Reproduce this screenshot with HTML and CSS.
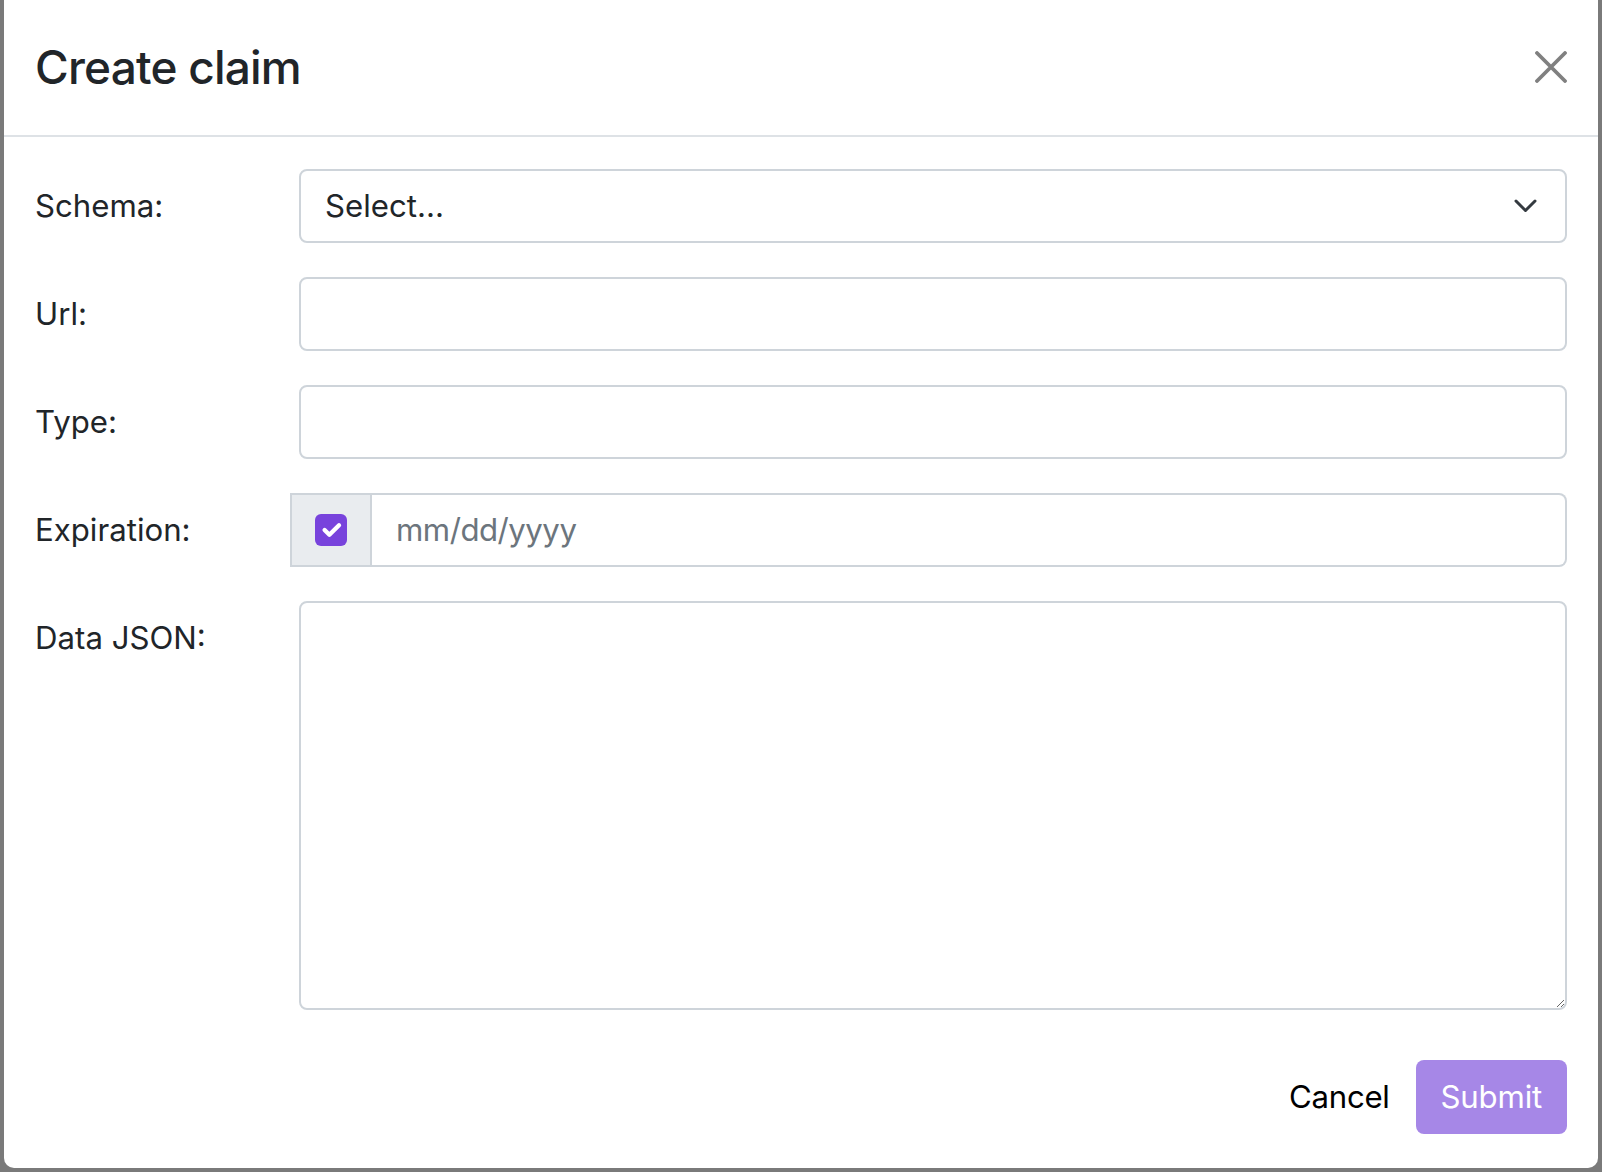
FILE: index.html
```html
<!DOCTYPE html>
<html lang="en">
<head>
<meta charset="utf-8">
<title>Create claim</title>
<link rel="stylesheet" href="styles.css">
</head>
<body>
<div class="backdrop">
  <div class="modal">
    <div class="modal-header">
      <h4 class="modal-title">Create claim</h4>
      <button class="btn-close" aria-label="Close">
        <svg width="32" height="32" viewBox="0 0 32 32"><path d="M2 2L30 30M30 2L2 30" stroke="#808080" stroke-width="3.8" stroke-linecap="round" fill="none"/></svg>
      </button>
    </div>
    <div class="modal-body">
      <div class="form-row">
        <label class="form-label">Schema:</label>
        <div class="form-control select">
          <span>Select...</span>
          <svg class="chevron" width="23" height="14" viewBox="0 0 23 14"><path d="M2 2L11.5 11.5L21 2" stroke="#343a40" stroke-width="3" stroke-linecap="round" stroke-linejoin="round" fill="none"/></svg>
        </div>
      </div>
      <div class="form-row">
        <label class="form-label">Url:</label>
        <div class="form-control"></div>
      </div>
      <div class="form-row">
        <label class="form-label">Type:</label>
        <div class="form-control"></div>
      </div>
      <div class="form-row">
        <label class="form-label">Expiration:</label>
        <div class="input-group">
          <div class="input-group-text">
            <span class="checkbox">
              <svg width="32" height="32" viewBox="0 0 20 20"><path d="M6 10l3 3l6-6" stroke="#fff" stroke-width="2.7" stroke-linecap="round" stroke-linejoin="round" fill="none"/></svg>
            </span>
          </div>
          <div class="date-input">mm/dd/yyyy</div>
        </div>
      </div>
      <div class="form-row last">
        <label class="form-label">Data JSON:</label>
        <textarea class="form-control textarea"></textarea>
      </div>
    </div>
    <div class="modal-footer">
      <span class="btn-cancel">Cancel</span>
      <span class="btn-submit">Submit</span>
    </div>
  </div>
</div>
</body>
</html>
```

FILE: styles.css
```css
* { box-sizing: border-box; }
html, body { margin: 0; padding: 0; }
body {
  background: #7a7a7a;
  font-family: Inter, "Noto Sans", "Liberation Sans", sans-serif;
  color: #212529;
  width: 1602px;
  height: 1172px;
  overflow: hidden;
}
.backdrop {
  padding: 0 4px 4px 4px;
  height: 1172px;
}
.modal {
  background: #fff;
  height: 1168px;
  border-radius: 0 0 10px 10px;
  display: flex;
  flex-direction: column;
}
.modal-header {
  display: flex;
  justify-content: space-between;
  align-items: center;
  padding: 39px 31px 40px 31px;
  border-bottom: 2px solid #dee2e6;
}
.modal-title {
  margin: 0;
  font-size: 46px;
  line-height: 56px;
  font-weight: 500;
  letter-spacing: -0.8px;
  color: #212529;
}
.btn-close {
  border: 0;
  background: none;
  padding: 0;
  width: 32px;
  height: 32px;
  display: flex;
}
.modal-body {
  padding: 32px 31px 0 31px;
}
.form-row {
  display: grid;
  grid-template-columns: 255px 1fr;
  margin-bottom: 34px;
}
.form-row.last { margin-bottom: 0; }
.form-label {
  font-size: 31.2px;
  line-height: 74px;
  color: #212529;
}
.form-control {
  display: block;
  margin-left: 9px;
  height: 74px;
  border: 2px solid #ced4da;
  border-radius: 8px;
  background: #fff;
  font-family: inherit;
  font-size: 31.2px;
  color: #212529;
}
.select {
  display: flex;
  align-items: center;
  justify-content: space-between;
  padding: 0 28px 0 24px;
  line-height: 46.8px;
}
.input-group {
  display: flex;
  height: 74px;
}
.input-group-text {
  width: 82px;
  background: #e9ecef;
  border: 2px solid #ced4da;
  display: flex;
  align-items: center;
  justify-content: center;
}
.checkbox {
  width: 32px;
  height: 32px;
  border-radius: 6px;
  background: #7843dc;
  display: flex;
}
.date-input {
  flex: 1;
  border: 2px solid #ced4da;
  border-left: 0;
  border-radius: 0 8px 8px 0;
  padding: 0 24px;
  font-size: 31.2px;
  line-height: 70px;
  letter-spacing: -0.5px;
  color: #6c757d;
}
.textarea {
  height: 409px;
  width: calc(100% - 9px);
  resize: both;
  outline: none;
  padding: 12px 24px;
}
.modal-footer {
  display: flex;
  justify-content: flex-end;
  align-items: center;
  gap: 26px;
  padding: 50px 31px 34px 31px;
}
.btn-cancel {
  font-size: 31.2px;
  line-height: 46.8px;
  letter-spacing: -0.3px;
  color: #000;
}
.btn-submit {
  height: 74px;
  padding: 0 25px;
  background: #a687e7;
  border-radius: 8px;
  color: #fff;
  font-size: 31.2px;
  line-height: 74px;
  letter-spacing: -0.2px;
}
```
